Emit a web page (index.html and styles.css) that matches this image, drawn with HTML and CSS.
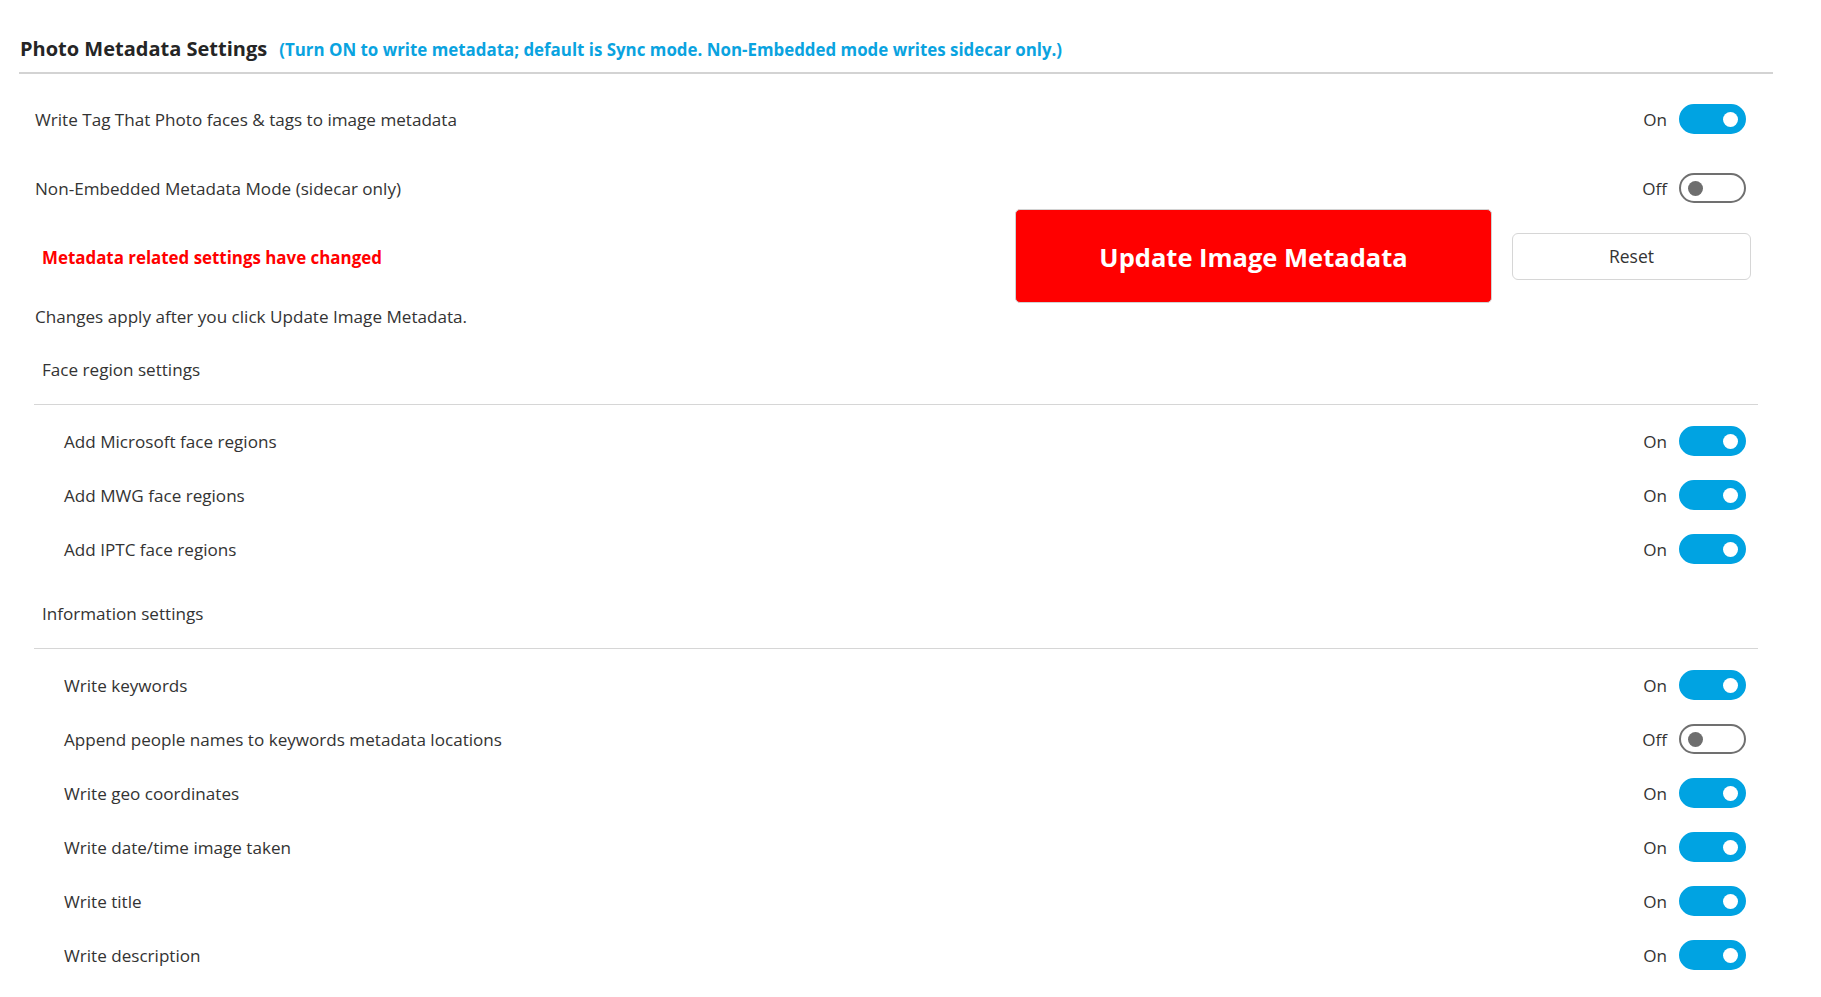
FILE: index.html
```html
<!DOCTYPE html>
<html lang="en">
<head>
    <meta charset="UTF-8">
    <meta name="viewport" content="width=device-width, initial-scale=1.0">
    <title>Photo Metadata Settings</title>
    <link rel="stylesheet" href="styles.css">
</head>
<body>
    <div class="page">
        <div class="header">
            <h2>Photo Metadata Settings</h2>
            <span class="hint">(Turn ON to write metadata; default is Sync mode. Non-Embedded mode writes sidecar only.)</span>
        </div>

        <div class="top-rows">
            <div class="row">
                <span>Write Tag That Photo faces &amp; tags to image metadata</span>
                <div class="switch-wrap"><span class="state">On</span><span class="switch on"><i></i></span></div>
            </div>
            <div class="row">
                <span>Non-Embedded Metadata Mode (sidecar only)</span>
                <div class="switch-wrap"><span class="state">Off</span><span class="switch"><i></i></span></div>
            </div>
        </div>

        <div class="action-row">
            <span class="changed">Metadata related settings have changed</span>
            <button class="btn-update">Update Image Metadata</button>
            <button class="btn-reset">Reset</button>
        </div>

        <p class="note">Changes apply after you click Update Image Metadata.</p>

        <div class="section">
            <div class="section-title">Face region settings</div>
            <div class="sub-row">
                <span>Add Microsoft face regions</span>
                <div class="switch-wrap"><span class="state">On</span><span class="switch on"><i></i></span></div>
            </div>
            <div class="sub-row">
                <span>Add MWG face regions</span>
                <div class="switch-wrap"><span class="state">On</span><span class="switch on"><i></i></span></div>
            </div>
            <div class="sub-row">
                <span>Add IPTC face regions</span>
                <div class="switch-wrap"><span class="state">On</span><span class="switch on"><i></i></span></div>
            </div>
        </div>

        <div class="section">
            <div class="section-title">Information settings</div>
            <div class="sub-row">
                <span>Write keywords</span>
                <div class="switch-wrap"><span class="state">On</span><span class="switch on"><i></i></span></div>
            </div>
            <div class="sub-row">
                <span>Append people names to keywords metadata locations</span>
                <div class="switch-wrap"><span class="state">Off</span><span class="switch"><i></i></span></div>
            </div>
            <div class="sub-row">
                <span>Write geo coordinates</span>
                <div class="switch-wrap"><span class="state">On</span><span class="switch on"><i></i></span></div>
            </div>
            <div class="sub-row">
                <span>Write date/time image taken</span>
                <div class="switch-wrap"><span class="state">On</span><span class="switch on"><i></i></span></div>
            </div>
            <div class="sub-row">
                <span>Write title</span>
                <div class="switch-wrap"><span class="state">On</span><span class="switch on"><i></i></span></div>
            </div>
            <div class="sub-row">
                <span>Write description</span>
                <div class="switch-wrap"><span class="state">On</span><span class="switch on"><i></i></span></div>
            </div>
        </div>
    </div>
</body>
</html>
```

FILE: styles.css
```css
body {
    font-family: 'Segoe UI', 'Open Sans', sans-serif;
    font-size: 17.1px;
    margin: 0;
    padding: 0;
    background: #ffffff;
    color: #333333;
}

.page {
    width: 1754px;
    margin-left: 19px;
}

.header {
    display: flex;
    align-items: baseline;
    gap: 12px;
    padding: 34px 0 8px 1px;
    border-bottom: 2px solid #d3d3d3;
}

.header h2 {
    margin: 0;
    font-size: 20px;
    line-height: 30px;
    color: #252525;
}

.hint {
    font-size: 16.9px;
    font-weight: bold;
    color: #0aa3e0;
}

.top-rows {
    margin-top: 25px;
}

.row {
    display: flex;
    align-items: center;
    justify-content: space-between;
    height: 40px;
    padding: 0 27px 0 16px;
}

.row + .row {
    margin-top: 29px;
}

.switch-wrap {
    display: flex;
    align-items: center;
    gap: 12px;
}

.switch {
    display: flex;
    align-items: center;
    box-sizing: border-box;
    width: 67px;
    height: 30px;
    padding: 0 6.5px;
    border: 2px solid #707070;
    border-radius: 15px;
}

.switch i {
    width: 15px;
    height: 15px;
    border-radius: 50%;
    background: #6e6e6e;
}

.switch.on {
    justify-content: flex-end;
    background: #00a3e2;
    border-color: #00a3e2;
}

.switch.on i {
    background: #ffffff;
}

.action-row {
    display: flex;
    align-items: center;
    gap: 20px;
    margin-top: 1px;
    padding: 0 22px 0 23px;
}

.changed {
    flex: 1;
    font-size: 16.9px;
    font-weight: bold;
    color: #ff0000;
    padding-top: 2px;
}

.btn-update {
    width: 477px;
    height: 94px;
    padding-top: 3px;
    background: #ff0000;
    color: #ffffff;
    border: 1px solid #d2d2d2;
    border-radius: 5px;
    font-family: inherit;
    font-size: 25.5px;
    font-weight: bold;
    cursor: pointer;
}

.btn-reset {
    width: 239px;
    height: 47px;
    background: #ffffff;
    color: #333333;
    border: 1px solid #d6d6d6;
    border-radius: 6px;
    font-family: inherit;
    font-size: 17.5px;
    cursor: pointer;
}

.note {
    margin: 2px 0 0 16px;
    line-height: 24px;
}

.section {
    margin: 29px 15px 0 15px;
}

.section + .section {
    margin-top: 26px;
}

.section-title {
    line-height: 24px;
    padding: 0 0 22px 8px;
    border-bottom: 1px solid #d6d6d6;
    margin-bottom: 9px;
}

.sub-row {
    display: flex;
    align-items: center;
    justify-content: space-between;
    height: 54px;
    padding: 0 12px 0 30px;
}
```
